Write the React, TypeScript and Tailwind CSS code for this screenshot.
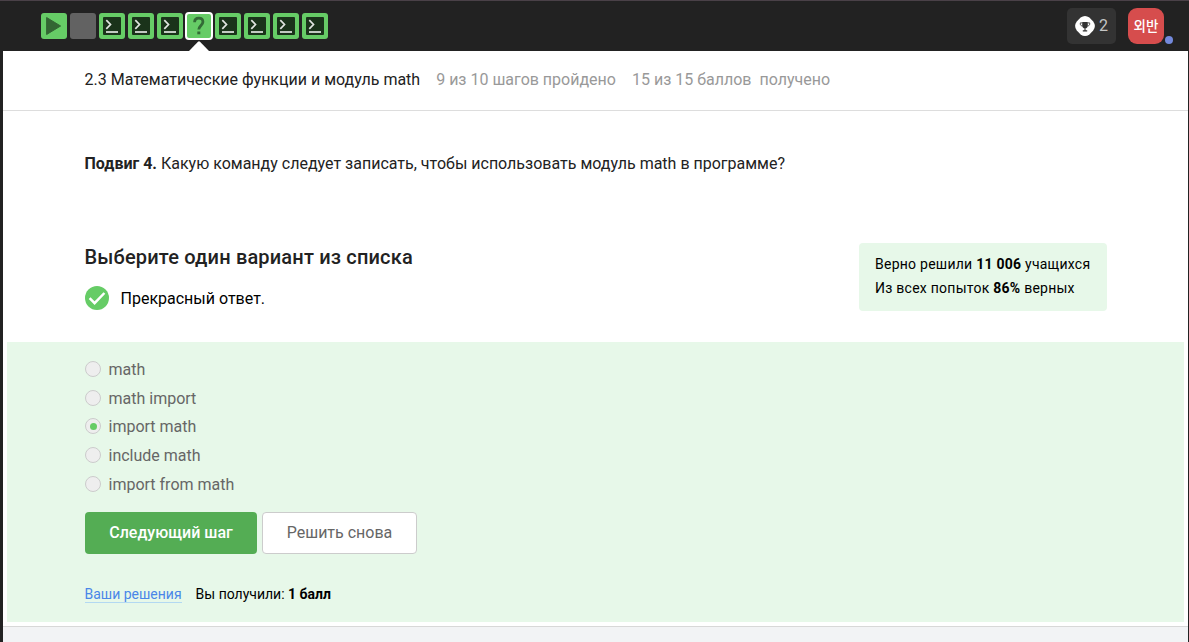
import React from 'react';

type StepKind = 'video' | 'text' | 'code' | 'quiz';

const steps: StepKind[] = ['video', 'text', 'code', 'code', 'code', 'quiz', 'code', 'code', 'code', 'code'];

const options = [
  { label: 'math', height: 'h-[29px]' },
  { label: 'math import', height: 'h-[28px]' },
  { label: 'import math', height: 'h-[29px]' },
  { label: 'include math', height: 'h-[29px]' },
  { label: 'import from math', height: 'h-[29px]' },
];

function Step({ kind }: { kind: StepKind }) {
  if (kind === 'text') return <div className="size-[26px] rounded-[3px] bg-[#626262]" />;
  if (kind === 'quiz') {
    return (
      <div className="relative -m-px size-7 rounded-[4px] border-2 border-white bg-[#66cc66]">
        <svg viewBox="0 0 24 24" className="size-6" fill="none" stroke="#336b36" strokeWidth="2.8">
          <path d="M7.6 8.3C7.6 5.5 9.2 4.2 11.8 4.2s4.1 1.4 4.1 3.8c0 3.1-4.1 3.9-4.1 7.5" />
          <path d="M10.3 18.9h3" />
        </svg>
        <svg viewBox="0 0 20 10" className="absolute left-[2px] top-[27px] h-[10px] w-[20px]" fill="#fff">
          <path d="M0 10 9 .8Q10-.2 11 .8L20 10Z" />
        </svg>
      </div>
    );
  }
  return (
    <div className="size-[26px] rounded-[3px] bg-[#66cc66]">
      <svg viewBox="0 0 26 26" className="size-[26px]" fill="none">
        {kind === 'video' ? (
          <path d="M5.6 4.5 19.6 13 5.6 21.5Z" fill="#336633" stroke="#336633" strokeLinejoin="round" />
        ) : (
          <>
            <rect x="4" y="4" width="18" height="18" rx="1" fill="#1a331a" />
            <path d="m7.3 7.2 4.2 4.3-4.2 4.3" stroke="#e0e5e0" strokeWidth="1.7" />
            <path d="M7 19h12" stroke="#e0e5e0" strokeWidth="1.7" />
          </>
        )}
      </svg>
    </div>
  );
}

function Header() {
  return (
    <header className="flex h-[51px] shrink-0 items-start justify-between border-t border-[#4a4148] bg-[#222222] pl-[41px] pr-[25px]">
      <nav className="flex gap-[3px] pt-3">
        {steps.map((kind, i) => (
          <Step key={i} kind={kind} />
        ))}
      </nav>
      <div className="flex gap-3 pt-[7px]">
        <div className="flex h-9 w-[49px] items-center gap-1 rounded-[5px] bg-[#333333] pl-2">
          <svg viewBox="0 0 20 20" className="size-5 shrink-0" fill="none">
            <path
              d="M5.6 1.6Q10-1.6 14.4 1.6L18.2 5.4Q21.6 10 18.2 14.6L14.4 18.4Q10 21.6 5.6 18.4L1.8 14.6Q-1.6 10 1.8 5.4Z"
              fill="#fff"
            />
            <path d="M7.2 6h5.6v3.4a2.8 2.8 0 0 1-5.6 0Z" fill="#333" />
            <path d="M7 6.9H5.3v.9c0 1.3.7 2 1.9 2.1M13 6.9h1.7v.9c0 1.3-.7 2-1.9 2.1" stroke="#333" strokeWidth=".9" />
            <path d="M10 11v3.4M7.8 14.9h4.4" stroke="#333" strokeWidth="1.1" />
          </svg>
          <span className="text-[16px] leading-6 text-[#c5c5c5]">2</span>
        </div>
        <div className="relative flex size-9 items-center justify-center rounded-[9px] bg-[#d64d4d]">
          <span className="pb-[2px] font-['Noto_Sans_CJK_KR',sans-serif] text-[13.5px] font-medium leading-5 text-white">외반</span>
          <span className="absolute -right-[9px] bottom-0 size-2 rounded-full bg-[#7389dc]" />
        </div>
      </div>
    </header>
  );
}

export default function App() {
  return (
    <div className="flex h-[642px] w-[1189px] flex-col overflow-hidden bg-[#222222] font-[Roboto,sans-serif] text-[16px] text-[#222222]">
      <Header />
      <main className="ml-[3px] mr-px flex min-h-0 flex-1 flex-col bg-white">
        <div className="flex h-[60px] shrink-0 items-center gap-4 whitespace-pre border-b border-[#dddddd] pb-[2px] pl-[81.5px] leading-6">
          <h1>2.3 Математические функции и модуль math</h1>
          <span className="text-[#999999]">9 из 10 шагов пройдено</span>
          <span className="text-[#999999]">15 из 15 баллов&nbsp; получено</span>
        </div>
        <p className="mt-[41px] h-6 shrink-0 pl-[81.5px] leading-6">
          <b>Подвиг 4.</b> Какую команду следует записать, чтобы использовать модуль math в программе?
        </p>
        <section className="mt-[67px] flex h-[99px] shrink-0 items-start justify-between pl-[82px] pr-[81px]">
          <div>
            <h2 className="-ml-[0.5px] text-[20px] font-medium leading-7 tracking-[0.17px]">
              Выберите один вариант из списка
            </h2>
            <div className="mt-[15px] flex h-6 items-center gap-[11.5px] text-black">
              <svg viewBox="0 0 24 24" className="size-6" fill="none">
                <circle cx="12" cy="12" r="12" fill="#66cc66" />
                <path d="m4.6 12.1 5 5L19.4 7" stroke="#fff" strokeWidth="2.5" />
              </svg>
              <span className="pt-[2px]">Прекрасный ответ.</span>
            </div>
          </div>
          <div className="h-[68px] w-[248px] whitespace-nowrap rounded-[4px] bg-[#e7f8e9] px-4 pt-[9px] text-[14px] leading-6 tracking-[0.25px] text-black">
            <p>
              Верно решили <b>11 006</b> учащихся
            </p>
            <p>
              Из всех попыток <b>86%</b> верных
            </p>
          </div>
        </section>
        <section className="ml-1 mr-1 h-[280px] shrink-0 bg-[#e7f8e9] pl-[78px] pt-4">
          <div className="text-[#666666]">
            {options.map(({ label, height }) => (
              <label key={label} className={`flex items-start gap-[7.5px] leading-6 ${height}`}>
                <span className="mt-[3px] flex size-4 items-center justify-center rounded-full border border-[#cccccc] bg-[#eeeeee]">
                  {label === 'import math' && <span className="size-[7px] rounded-full bg-[#66cc66]" />}
                </span>
                {label}
              </label>
            ))}
          </div>
          <div className="mt-[10px] flex gap-[5px]">
            <button className="h-[42px] w-[172px] rounded-[4px] bg-[#54ad54] font-medium text-white">
              Следующий шаг
            </button>
            <button className="h-[42px] w-[155px] rounded-[4px] border border-[#cccccc] bg-white text-[#666666]">
              Решить снова
            </button>
          </div>
          <div className="-ml-[0.5px] mt-[31px] flex items-start gap-[14px] text-[14px] leading-[18px] text-black">
            <a className="h-[18px] border-b border-[#b3d9f2] text-[#4a86e8]">Ваши решения</a>
            <p>
              Вы получили: <b>1 балл</b>
            </p>
          </div>
        </section>
        <footer className="mt-1 flex-1 border-t border-[#d8d8d8] bg-[#f2f3f5]" />
      </main>
    </div>
  );
}
